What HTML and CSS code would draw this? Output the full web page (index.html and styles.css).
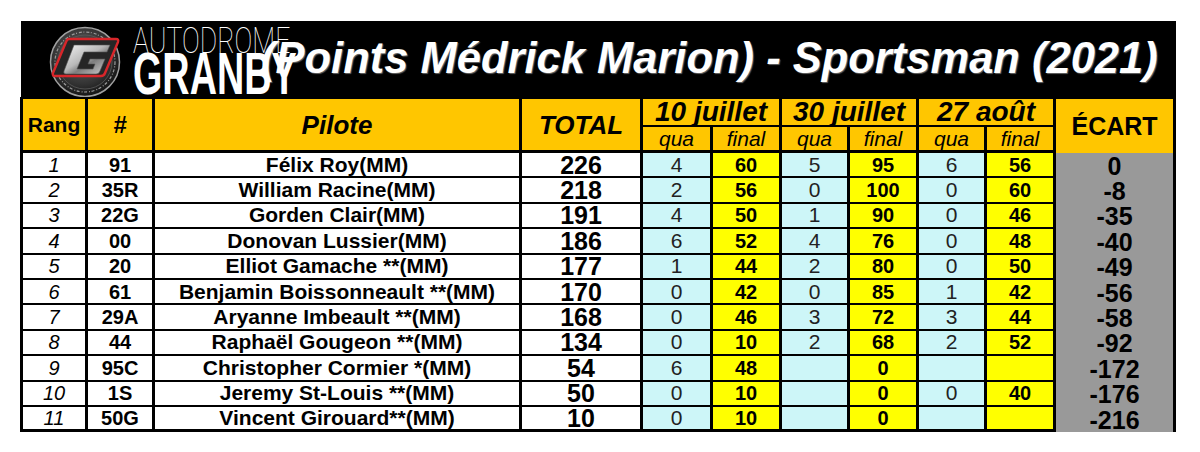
FILE: index.html
```html
<!DOCTYPE html>
<html lang="fr">
<head>
<meta charset="utf-8">
<title>Points Médrick Marion - Sportsman (2021)</title>
<link rel="stylesheet" href="styles.css">
</head>
<body>
<div class="sheet">
  <header class="banner">
    <svg class="logo" viewBox="0 0 76 72" width="76" height="72" aria-hidden="true">
      <defs>
        <radialGradient id="disc" cx="45%" cy="40%" r="60%">
          <stop offset="0" stop-color="#6a6a6a"/>
          <stop offset="0.7" stop-color="#333"/>
          <stop offset="1" stop-color="#151515"/>
        </radialGradient>
        <linearGradient id="silver" x1="0" y1="0" x2="1" y2="1">
          <stop offset="0" stop-color="#f4f4f4"/>
          <stop offset="0.45" stop-color="#b9b9b9"/>
          <stop offset="0.6" stop-color="#7d7d7d"/>
          <stop offset="1" stop-color="#d8d8d8"/>
        </linearGradient>
      </defs>
      <circle cx="38" cy="36" r="34.5" fill="url(#disc)" stroke="#a0a0a0" stroke-width="1.5"/>
      <circle cx="38" cy="36" r="30" fill="none" stroke="#9a9a9a" stroke-width="1.2" stroke-dasharray="3 1.5 1 2"/>
      <circle cx="38" cy="36" r="27" fill="none" stroke="#5a5a5a" stroke-width="0.8"/>
      <path d="M22,13 L69,13 Q72,13 71,16 L58,47 Q57,50 54,50 L8,50 Q5,50 6,47 L19,16 Q20,13 22,13 Z" fill="#262626" stroke="#d8262a" stroke-width="2.4"/>
      <path d="M27,19 L63,19 L60,26 L37,26 L30,43 L46,43 L48,38 L41,38 L43,33 L58,33 L53,45 Q52,48 49,48 L19,48 Q16,48 17,45 L27,19 Z" fill="url(#silver)" stroke="#555" stroke-width="0.6"/>
    </svg>
    <div class="brand">
      <span class="brand-top">AUTODROME</span>
      <span class="brand-bottom">GRANBY</span>
    </div>
    <h1 class="title">(Points Médrick Marion) - Sportsman (2021)</h1>
  </header>

  <table class="standings">
    <colgroup>
      <col class="c-rang"><col class="c-num"><col class="c-pilote"><col class="c-total">
      <col class="c-q1"><col class="c-f1"><col class="c-q2"><col class="c-f2"><col class="c-q3"><col class="c-f3">
      <col class="c-ecart">
    </colgroup>
    <thead>
      <tr class="hrow1">
        <th rowspan="2" class="h-rang">Rang</th>
        <th rowspan="2" class="h-num">#</th>
        <th rowspan="2" class="h-pilote">Pilote</th>
        <th rowspan="2" class="h-total">TOTAL</th>
        <th colspan="2" class="h-date">10 juillet</th>
        <th colspan="2" class="h-date">30 juillet</th>
        <th colspan="2" class="h-date">27 août</th>
        <th rowspan="2" class="h-ecart">ÉCART</th>
      </tr>
      <tr class="hrow2">
        <th class="h-sub">qua</th><th class="h-sub">final</th>
        <th class="h-sub">qua</th><th class="h-sub">final</th>
        <th class="h-sub">qua</th><th class="h-sub">final</th>
      </tr>
    </thead>
    <tbody>
      <tr><td class="rang">1</td><td class="num">91</td><td class="pilote">Félix Roy(MM)</td><td class="total">226</td><td class="qua">4</td><td class="fin">60</td><td class="qua">5</td><td class="fin">95</td><td class="qua">6</td><td class="fin">56</td><td class="ecart">0</td></tr>
      <tr><td class="rang">2</td><td class="num">35R</td><td class="pilote">William Racine(MM)</td><td class="total">218</td><td class="qua">2</td><td class="fin">56</td><td class="qua">0</td><td class="fin">100</td><td class="qua">0</td><td class="fin">60</td><td class="ecart">-8</td></tr>
      <tr><td class="rang">3</td><td class="num">22G</td><td class="pilote">Gorden Clair(MM)</td><td class="total">191</td><td class="qua">4</td><td class="fin">50</td><td class="qua">1</td><td class="fin">90</td><td class="qua">0</td><td class="fin">46</td><td class="ecart">-35</td></tr>
      <tr><td class="rang">4</td><td class="num">00</td><td class="pilote">Donovan Lussier(MM)</td><td class="total">186</td><td class="qua">6</td><td class="fin">52</td><td class="qua">4</td><td class="fin">76</td><td class="qua">0</td><td class="fin">48</td><td class="ecart">-40</td></tr>
      <tr><td class="rang">5</td><td class="num">20</td><td class="pilote">Elliot Gamache **(MM)</td><td class="total">177</td><td class="qua">1</td><td class="fin">44</td><td class="qua">2</td><td class="fin">80</td><td class="qua">0</td><td class="fin">50</td><td class="ecart">-49</td></tr>
      <tr><td class="rang">6</td><td class="num">61</td><td class="pilote">Benjamin Boissonneault **(MM)</td><td class="total">170</td><td class="qua">0</td><td class="fin">42</td><td class="qua">0</td><td class="fin">85</td><td class="qua">1</td><td class="fin">42</td><td class="ecart">-56</td></tr>
      <tr><td class="rang">7</td><td class="num">29A</td><td class="pilote">Aryanne Imbeault **(MM)</td><td class="total">168</td><td class="qua">0</td><td class="fin">46</td><td class="qua">3</td><td class="fin">72</td><td class="qua">3</td><td class="fin">44</td><td class="ecart">-58</td></tr>
      <tr><td class="rang">8</td><td class="num">44</td><td class="pilote">Raphaël Gougeon **(MM)</td><td class="total">134</td><td class="qua">0</td><td class="fin">10</td><td class="qua">2</td><td class="fin">68</td><td class="qua">2</td><td class="fin">52</td><td class="ecart">-92</td></tr>
      <tr><td class="rang">9</td><td class="num">95C</td><td class="pilote">Christopher Cormier *(MM)</td><td class="total">54</td><td class="qua">6</td><td class="fin">48</td><td class="qua"></td><td class="fin">0</td><td class="qua"></td><td class="fin"></td><td class="ecart">-172</td></tr>
      <tr><td class="rang">10</td><td class="num">1S</td><td class="pilote">Jeremy St-Louis **(MM)</td><td class="total">50</td><td class="qua">0</td><td class="fin">10</td><td class="qua"></td><td class="fin">0</td><td class="qua">0</td><td class="fin">40</td><td class="ecart">-176</td></tr>
      <tr class="last"><td class="rang">11</td><td class="num">50G</td><td class="pilote">Vincent Girouard**(MM)</td><td class="total">10</td><td class="qua">0</td><td class="fin">10</td><td class="qua"></td><td class="fin">0</td><td class="qua"></td><td class="fin"></td><td class="ecart">-216</td></tr>
    </tbody>
  </table>
</div>
</body>
</html>
```

FILE: styles.css
```css
html, body {
  margin: 0;
  padding: 0;
  background: #ffffff;
}

body {
  font-family: "Liberation Sans", Arial, sans-serif;
  color: #000;
}

.sheet {
  padding: 21px 0 0 20px;
  width: 1156px;
}

/* ---------- banner ---------- */
.banner {
  margin: 0 0 0 1px;
  width: 1155px;
  height: 76px;
  background: #000;
  display: flex;
  align-items: flex-start;
  overflow: hidden;
}

.logo {
  flex: none;
  margin: 5px 0 0 26px;
  display: block;
}

.brand {
  flex: none;
  width: 164px;
  margin: 5px 0 0 10px;
  display: flex;
  flex-direction: column;
  color: #fff;
}

.brand-top {
  display: block;
  font-family: Roboto, "Liberation Sans", sans-serif;
  font-weight: 100;
  font-size: 36px;
  line-height: 30px;
  white-space: nowrap;
  transform: scaleX(0.74);
  transform-origin: left center;
}

.brand-bottom {
  display: block;
  font-family: "Liberation Sans", Arial, sans-serif;
  font-weight: 700;
  font-size: 59px;
  line-height: 36px;
  white-space: nowrap;
  transform: scaleX(0.64);
  transform-origin: left center;
}

.title {
  flex: none;
  margin: 16px 0 0 -36px;
  font-family: "Liberation Sans", Arial, sans-serif;
  font-weight: 700;
  font-style: italic;
  font-size: 43.5px;
  line-height: 43px;
  color: #fff;
  white-space: nowrap;
  text-shadow: 1px 1px 1px #666;
}

/* ---------- table ---------- */
.standings {
  border-collapse: separate;
  border-spacing: 0;
  table-layout: fixed;
  width: 1156px;
  border-left: 3px solid #000;
  border-top: 2px solid #000;
}

.c-rang { width: 65px; }
.c-num { width: 67px; }
.c-pilote { width: 367px; }
.c-total { width: 121px; }
.c-q1 { width: 70px; }
.c-f1 { width: 69px; }
.c-q2 { width: 68px; }
.c-f2 { width: 69px; }
.c-q3 { width: 68px; }
.c-f3 { width: 69px; }
.c-ecart { width: 120px; }

.standings th,
.standings td {
  padding: 0;
  border-right: 3px solid #000;
  border-bottom: 2px solid #000;
  text-align: center;
  vertical-align: middle;
  white-space: nowrap;
}

.standings th {
  background: #ffc600;
  color: #000;
  line-height: 22px;
}

.standings td {
  background: #fff;
  line-height: 20px;
}

.hrow1 { height: 28px; }
.hrow2 { height: 26px; }

.standings th[rowspan],
.standings .h-sub {
  border-bottom-width: 3px;
}

.h-rang { font-size: 21px; font-weight: 700; }
.h-num { font-size: 24px; font-weight: 700; font-style: italic; }
.h-pilote { font-size: 26px; font-weight: 700; font-style: italic; }
.h-total { font-size: 26px; font-weight: 700; font-style: italic; }
.standings .h-date { font-size: 28px; font-weight: 700; font-style: italic; line-height: 24px; }
.standings .h-sub { font-size: 21px; font-weight: 400; font-style: italic; line-height: 20px; }
.standings .h-ecart { font-size: 25px; font-weight: 700; border-bottom: none; }

.standings tbody tr { height: 25.4px; }

.standings tr.last td { border-bottom-width: 3px; }

.rang { font-size: 20px; font-style: italic; }
.num { font-size: 20px; font-weight: 700; }
.pilote { font-size: 21px; font-weight: 700; }
.total { font-size: 25px; font-weight: 700; }
.standings td.qua { font-size: 21px; background: #cdf6f8; color: #222; }
.standings td.fin { font-size: 20px; font-weight: 700; background: #ffff00; }
.standings td.ecart,
.standings tr.last td.ecart {
  font-size: 25px;
  font-weight: 700;
  background: #999999;
  border-bottom: none;
}
```
